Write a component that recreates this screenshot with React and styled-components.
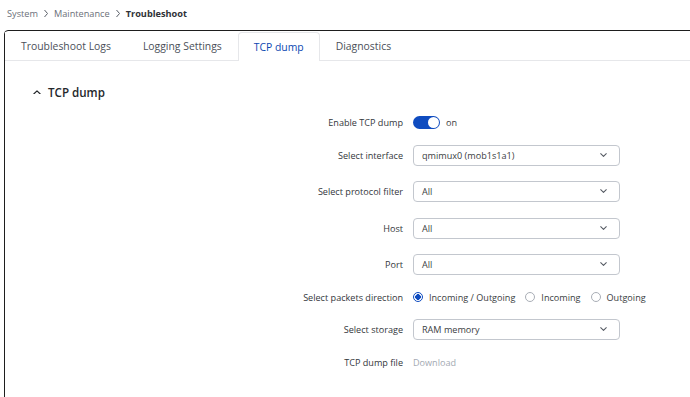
import React from "react";
import styled, { createGlobalStyle } from "styled-components";

const Global = createGlobalStyle`
  html, body {
    margin: 0;
    padding: 0;
    background: #fff;
    font-family: "Open Sans", "Liberation Sans", sans-serif;
    overflow: hidden;
  }
`;

const Page = styled.div`
  width: 690px;
  height: 397px;
  overflow: hidden;
`;

const Breadcrumb = styled.div`
  display: flex;
  align-items: center;
  gap: 5px;
  height: 26px;
  padding-left: 7px;
  font-size: 9.2px;
  color: #6b7079;
`;

const Crumb = styled.span`
  color: ${(p) => (p.$current ? "#2f3237" : "#6b7079")};
  font-weight: ${(p) => (p.$current ? 700 : 400)};
`;

const Card = styled.div`
  margin: 4px -20px 0 4px;
  border: 1px solid #1e1e1e;
  border-radius: 4px 0 0 0;
  height: 420px;
`;

const TabBar = styled.div`
  display: flex;
  height: 28px;
  margin-top: 1px;
  border-bottom: 1px solid #e6e7ea;
`;

const Tab = styled.div`
  display: flex;
  align-items: center;
  padding: 0 16px;
  font-size: 10.4px;
  color: ${(p) => (p.$active ? "#0b47b1" : "#4b5059")};
  background: #fff;
  ${(p) =>
    p.$active &&
    `
    border: 1px solid #e6e7ea;
    border-bottom: none;
    border-radius: 4px 4px 0 0;
    margin-bottom: -1px;
    padding: 0 15px;
  `}
`;

const Section = styled.div`
  display: flex;
  align-items: center;
  gap: 7px;
  height: 20px;
  margin: 21px 0 0 28px;
  font-size: 11.6px;
  font-weight: 600;
  color: #24272b;
`;

const Form = styled.div`
  display: grid;
  grid-template-columns: 398px auto;
  column-gap: 10px;
  row-gap: 15.5px;
  align-items: center;
  margin-top: 14px;
`;

const Label = styled.div`
  text-align: right;
  font-size: 9.1px;
  color: #33363b;
  line-height: 13px;
`;

const Control = styled.div`
  display: flex;
  align-items: center;
  gap: 6px;
  font-size: 9.1px;
  color: #3a3d42;
  min-height: 13px;
`;

const Toggle = styled.div`
  width: 27px;
  height: 13px;
  border-radius: 7px;
  background: #0f4cc0;
  position: relative;
  &::after {
    content: "";
    position: absolute;
    right: 1px;
    top: 1px;
    width: 11px;
    height: 11px;
    border-radius: 50%;
    background: #fff;
  }
`;

const Select = styled.div`
  width: 207px;
  height: 21px;
  box-sizing: border-box;
  border: 1px solid #c3c7ce;
  border-radius: 4px;
  display: flex;
  align-items: center;
  justify-content: space-between;
  padding: 0 12px 0 8px;
  font-size: 9.1px;
  color: #3a3d42;
`;

const Radio = styled.span`
  display: inline-flex;
  align-items: center;
  gap: 6px;
  margin-right: 4px;
  &::before {
    content: "";
    width: 8px;
    height: 8px;
    border-radius: 50%;
    border: 1px solid ${(p) => (p.$checked ? "#0f4cc0" : "#a9aeb6")};
    background: ${(p) =>
      p.$checked ? "radial-gradient(circle, #0f4cc0 0 2.6px, #fff 3px)" : "#fff"};
  }
`;

const Link = styled.span`
  color: #a3a9b2;
  font-size: 9.1px;
`;

const Chevron = ({ up, size = 7, color = "#4b5059" }) => (
  <svg width={size} height={size * 0.6} viewBox="0 0 10 6" fill="none">
    <path
      d={up ? "M1 5L5 1L9 5" : "M1 1L5 5L9 1"}
      stroke={color}
      strokeWidth="1.5"
      strokeLinecap="round"
      strokeLinejoin="round"
    />
  </svg>
);

const Sep = () => (
  <svg width="6" height="9" viewBox="0 0 6 9" fill="none">
    <path d="M1.5 1L4.5 4.5L1.5 8" stroke="#5a5f68" strokeWidth="1" />
  </svg>
);

const SelectBox = ({ value }) => (
  <Select>
    <span>{value}</span>
    <Chevron size={7} color="#555a63" />
  </Select>
);

export default function App() {
  return (
    <Page>
      <Global />
      <Breadcrumb>
        <Crumb>System</Crumb>
        <Sep />
        <Crumb>Maintenance</Crumb>
        <Sep />
        <Crumb $current>Troubleshoot</Crumb>
      </Breadcrumb>
      <Card>
        <TabBar>
          <Tab>Troubleshoot Logs</Tab>
          <Tab>Logging Settings</Tab>
          <Tab $active>TCP dump</Tab>
          <Tab>Diagnostics</Tab>
        </TabBar>
        <Section>
          <Chevron up size={8} color="#24272b" />
          TCP dump
        </Section>
        <Form>
          <Label>Enable TCP dump</Label>
          <Control>
            <Toggle />
            on
          </Control>
          <Label>Select interface</Label>
          <SelectBox value="qmimux0 (mob1s1a1)" />
          <Label>Select protocol filter</Label>
          <SelectBox value="All" />
          <Label>Host</Label>
          <SelectBox value="All" />
          <Label>Port</Label>
          <SelectBox value="All" />
          <Label>Select packets direction</Label>
          <Control>
            <Radio $checked>Incoming / Outgoing</Radio>
            <Radio>Incoming</Radio>
            <Radio>Outgoing</Radio>
          </Control>
          <Label>Select storage</Label>
          <SelectBox value="RAM memory" />
          <Label>TCP dump file</Label>
          <Control>
            <Link>Download</Link>
          </Control>
        </Form>
      </Card>
    </Page>
  );
}
